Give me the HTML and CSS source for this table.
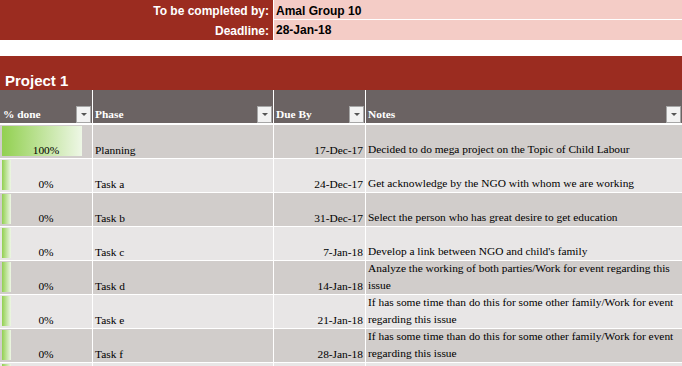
FILE: index.html
```html
<!DOCTYPE html>
<html>
<head>
<meta charset="utf-8">
<link rel="stylesheet" href="styles.css">
</head>
<body>
<div class="sheet">
  <div class="info">
    <div class="labels">
      <div class="lab">To be completed by:</div>
      <div class="lab">Deadline:</div>
    </div>
    <div class="values">
      <div class="val">Amal Group 10</div>
      <div class="val">28-Jan-18</div>
    </div>
  </div>
  <div class="spacer"></div>
  <div class="project">Project 1</div>
  <div class="table">
    <div class="hd c1"><span>% done</span><span class="flt"></span></div>
    <div class="hd c2"><span>Phase</span><span class="flt"></span></div>
    <div class="hd c3"><span>Due By</span><span class="flt"></span></div>
    <div class="hd c4"><span>Notes</span><span class="flt"></span></div>

    <div class="cell pct dark"><span class="bar" style="width:80px"></span><span class="ptxt">100%</span></div>
    <div class="cell dark">Planning</div>
    <div class="cell due dark">17-Dec-17</div>
    <div class="cell note dark">Decided to do mega project on the Topic of Child Labour</div>

    <div class="cell pct light"><span class="bar" style="width:9px"></span><span class="ptxt">0%</span></div>
    <div class="cell light">Task a</div>
    <div class="cell due light">24-Dec-17</div>
    <div class="cell note light">Get acknowledge by the NGO with whom we are working</div>

    <div class="cell pct dark"><span class="bar" style="width:9px"></span><span class="ptxt">0%</span></div>
    <div class="cell dark">Task b</div>
    <div class="cell due dark">31-Dec-17</div>
    <div class="cell note dark">Select the person who has great desire to get education</div>

    <div class="cell pct light"><span class="bar" style="width:9px"></span><span class="ptxt">0%</span></div>
    <div class="cell light">Task c</div>
    <div class="cell due light">7-Jan-18</div>
    <div class="cell note light">Develop a link between NGO and child's family</div>

    <div class="cell pct dark"><span class="bar" style="width:9px"></span><span class="ptxt">0%</span></div>
    <div class="cell dark">Task d</div>
    <div class="cell due dark">14-Jan-18</div>
    <div class="cell note dark">Analyze the working of both parties/Work for event regarding this issue</div>

    <div class="cell pct light"><span class="bar" style="width:9px"></span><span class="ptxt">0%</span></div>
    <div class="cell light">Task e</div>
    <div class="cell due light">21-Jan-18</div>
    <div class="cell note light">If has some time than do this for some other family/Work for event regarding this issue</div>

    <div class="cell pct dark"><span class="bar" style="width:9px"></span><span class="ptxt">0%</span></div>
    <div class="cell dark">Task f</div>
    <div class="cell due dark">28-Jan-18</div>
    <div class="cell note dark">If has some time than do this for some other family/Work for event regarding this issue</div>

    <div class="cell pct light"><span class="bar" style="width:9px"></span></div>
    <div class="cell light"></div>
    <div class="cell due light"></div>
    <div class="cell note light"></div>
  </div>
</div>
</body>
</html>
```
FILE: styles.css
```css
html, body {
  margin: 0;
  padding: 0;
  background: #ffffff;
  overflow: hidden;
}
.sheet {
  width: 682px;
  height: 366px;
  overflow: hidden;
}
.info {
  display: grid;
  grid-template-columns: 273px 408px;
  column-gap: 1px;
  height: 40px;
  font-family: "Liberation Sans", Arial, sans-serif;
  font-weight: bold;
  font-size: 12px;
}
.labels {
  background: #9b2c20;
  color: #ffffff;
  display: flex;
  flex-direction: column;
}
.lab {
  height: 20px;
  line-height: 22px;
  text-align: right;
  padding-right: 4px;
  box-sizing: border-box;
}
.values {
  display: flex;
  flex-direction: column;
  gap: 1px;
}
.val {
  background: #f4ccc6;
  color: #000000;
  height: 19px;
  line-height: 22px;
  padding-left: 2px;
}
.val + .val {
  height: 20px;
  line-height: 21px;
}
.spacer {
  height: 16px;
}
.project {
  background: #9b2c20;
  color: #ffffff;
  height: 34px;
  box-sizing: border-box;
  font-family: "Liberation Sans", Arial, sans-serif;
  font-weight: bold;
  font-size: 15px;
  padding: 16px 0 0 5px;
  line-height: 17px;
}
.table {
  display: grid;
  grid-template-columns: 92px 180px 91px 316px;
  grid-template-rows: 34px repeat(8, 33px);
  column-gap: 1px;
  row-gap: 1px;
  background: #ffffff;
  font-family: "Liberation Serif", "Times New Roman", serif;
  font-size: 11.4px;
  color: #000000;
}
.hd {
  background: #6b6363;
  color: #ffffff;
  font-weight: bold;
  position: relative;
  display: flex;
  align-items: flex-end;
  padding: 0 0 1px 3px;
  box-sizing: border-box;
  margin-bottom: 1px;
  line-height: 15px;
}
.hd.c2, .hd.c3, .hd.c4 {
  padding-left: 2px;
}
.flt {
  position: absolute;
  right: 1px;
  bottom: 0;
  width: 15px;
  height: 17px;
  box-sizing: border-box;
  background: #f2f2f2;
  border: 1px solid #a6a6a6;
}
.flt::after {
  content: "";
  position: absolute;
  left: 4px;
  top: 6px;
  border-left: 3px solid transparent;
  border-right: 3px solid transparent;
  border-top: 3px solid #555555;
}
.cell {
  display: flex;
  align-items: flex-end;
  padding: 0 2px 0 2px;
  box-sizing: border-box;
  line-height: 15px;
  overflow: hidden;
}
.dark { background: #d1cdcb; }
.light { background: #e8e6e6; }
.pct {
  position: relative;
  justify-content: center;
}
.bar {
  position: absolute;
  left: 2px;
  top: 1px;
  bottom: 2px;
  background: linear-gradient(to right, #92d050, #eef7e6);
}
.ptxt {
  position: relative;
}
.due {
  justify-content: flex-end;
}
.note {
  line-height: 17px;
  padding: 0 4px 0 2px;
}
```
